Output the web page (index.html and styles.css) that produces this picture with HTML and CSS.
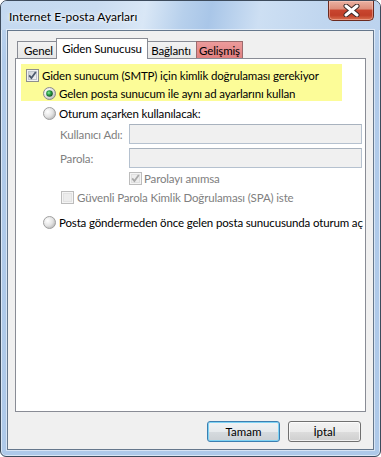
FILE: index.html
```html
<!DOCTYPE html>
<html lang="tr">
<head>
<meta charset="utf-8">
<title>Internet E-posta Ayarları</title>
<link rel="stylesheet" href="styles.css">
</head>
<body>
<svg class="defs" width="0" height="0" aria-hidden="true">
  <defs>
    <linearGradient id="cbfill" x1="0" y1="0" x2="1" y2="1">
      <stop offset="0" stop-color="#cbcfd5"/>
      <stop offset="1" stop-color="#f6f6f6"/>
    </linearGradient>
    <radialGradient id="rfill" cx="0.35" cy="0.35" r="0.7">
      <stop offset="0" stop-color="#ffffff"/>
      <stop offset="0.6" stop-color="#e3e3e3"/>
      <stop offset="1" stop-color="#b9b9b9"/>
    </radialGradient>
    <radialGradient id="rdot" cx="0.4" cy="0.4" r="0.65">
      <stop offset="0" stop-color="#8ff0a4"/>
      <stop offset="0.45" stop-color="#2aa043"/>
      <stop offset="1" stop-color="#0d4a1c"/>
    </radialGradient>
  </defs>
</svg>

<div class="window">
  <div class="titlebar">
    <span class="title">Internet E-posta Ayarları</span>
    <div class="close">
      <svg width="17" height="13" viewBox="0 0 17 13">
        <path d="M3 2 L14 11 M14 2 L3 11" stroke="#3b2a28" stroke-width="5" stroke-linecap="round"/>
        <path d="M3 2 L14 11 M14 2 L3 11" stroke="#ffffff" stroke-width="3" stroke-linecap="round"/>
      </svg>
    </div>
  </div>

  <div class="client">
    <div class="tabs">
      <div class="tab t-genel">Genel</div>
      <div class="tab sel t-giden">Giden Sunucusu</div>
      <div class="tab t-baglanti">Bağlantı</div>
      <div class="tab warn t-gelismis">Gelişmiş</div>
    </div>

    <div class="panel">
      <div class="hilite">
        <div class="row r-auth">
          <svg class="cb" width="13" height="13" viewBox="0 0 13 13">
            <rect x="0.5" y="0.5" width="12" height="12" fill="#f2f2f2" stroke="#8e8f8f"/>
            <rect x="2.5" y="2.5" width="8" height="8" fill="url(#cbfill)" stroke="#bfc4cb"/>
            <path d="M3.2 6.4 L5.4 9 L9.8 3" stroke="#4d5a6e" stroke-width="1.8" fill="none"/>
          </svg>
          <span>Giden sunucum (SMTP) için kimlik doğrulaması gerekiyor</span>
        </div>
        <div class="row r-same">
          <svg class="rb" width="13" height="13" viewBox="0 0 13 13">
            <circle cx="6.5" cy="6.5" r="6" fill="url(#rfill)" stroke="#8a8a8a"/>
            <circle cx="6.5" cy="6.5" r="3.3" fill="url(#rdot)"/>
          </svg>
          <span>Gelen posta sunucum ile aynı ad ayarlarını kullan</span>
        </div>
      </div>

      <div class="row r-login">
        <svg class="rb" width="13" height="13" viewBox="0 0 13 13">
          <circle cx="6.5" cy="6.5" r="6" fill="url(#rfill)" stroke="#a0a0a0"/>
        </svg>
        <span>Oturum açarken kullanılacak:</span>
      </div>

      <div class="field f-user">
        <span class="lbl">Kullanıcı Adı:</span>
        <div class="input"></div>
      </div>
      <div class="field f-pass">
        <span class="lbl">Parola:</span>
        <div class="input"></div>
      </div>

      <div class="row r-remember dis">
        <svg class="cb" width="13" height="13" viewBox="0 0 13 13">
          <rect x="0.5" y="0.5" width="12" height="12" fill="#f4f4f4" stroke="#bcbcbc"/>
          <rect x="2.5" y="2.5" width="8" height="8" fill="#ededed" stroke="#e0e0e0"/>
          <path d="M3.2 6.4 L5.4 9 L9.8 3" stroke="#a9a9a9" stroke-width="1.8" fill="none"/>
        </svg>
        <span>Parolayı anımsa</span>
      </div>

      <div class="row r-spa dis">
        <svg class="cb" width="13" height="13" viewBox="0 0 13 13">
          <rect x="0.5" y="0.5" width="12" height="12" fill="#f4f4f4" stroke="#bcbcbc"/>
          <rect x="2.5" y="2.5" width="8" height="8" fill="#ececec" stroke="#e2e2e2"/>
        </svg>
        <span>Güvenli Parola Kimlik Doğrulaması (SPA) iste</span>
      </div>

      <div class="row r-pop">
        <svg class="rb" width="13" height="13" viewBox="0 0 13 13">
          <circle cx="6.5" cy="6.5" r="6" fill="url(#rfill)" stroke="#a0a0a0"/>
        </svg>
        <span>Posta göndermeden önce gelen posta sunucusunda oturum aç</span>
      </div>
    </div>

    <div class="buttons">
      <button class="btn default">Tamam</button>
      <button class="btn">İptal</button>
    </div>
  </div>
</div>
</body>
</html>
```

FILE: styles.css
```css
* { box-sizing: border-box; }

html, body {
  margin: 0;
  padding: 0;
  background: #ffffff;
}

body {
  font-family: Lato, "Liberation Sans", sans-serif;
  font-size: 11.5px;
  letter-spacing: -0.15px;
  color: #000;
}

.defs {
  position: absolute;
  width: 0;
  height: 0;
}

.window {
  position: relative;
  width: 381px;
  height: 457px;
  border: 1px solid #3d4b5c;
  border-radius: 7px 7px 6px 6px;
  background: linear-gradient(to bottom, #c0d6ef 0px, #b1cbea 60px, #aec9e9 100%);
  box-shadow: inset 0 0 0 1px rgba(255, 255, 255, 0.55);
  display: flex;
  flex-direction: column;
  overflow: hidden;
}

.titlebar {
  height: 29px;
  display: flex;
  align-items: center;
  padding-left: 8px;
  background: linear-gradient(100deg,
    #c4d9f0 0%, #c9dcf1 25%, #d9e7f6 38%, #b7d0ec 48%,
    #a9c6e8 55%, #cddff3 68%, #c0d6ef 85%, #bcd3ee 100%);
}

.title {
  font-size: 12px;
  letter-spacing: 0;
  color: #000;
  white-space: nowrap;
  text-shadow: 0 0 6px #fff, 0 0 3px #fff;
  margin-top: 1px;
}

.close {
  position: absolute;
  top: 0;
  right: 6px;
  width: 46px;
  height: 20px;
  border: 1px solid #6b2a1f;
  border-top: none;
  border-radius: 0 0 5px 5px;
  background: linear-gradient(to bottom,
    #eab1a2 0%, #de8f7c 40%, #c8452e 50%, #c13f28 75%, #d8704f 100%);
  box-shadow: inset 0 0 0 1px rgba(255, 210, 200, 0.45);
  display: flex;
  align-items: center;
  justify-content: center;
}

.client {
  margin: 0 6px 6px 6px;
  flex: 1;
  background: #f0f0f0;
  border: 1px solid #65778c;
  box-shadow: 0 0 0 1px rgba(255, 255, 255, 0.5);
  padding: 7px 7px 0 7px;
  display: flex;
  flex-direction: column;
}

/* Tabs */
.tabs {
  display: flex;
  align-items: flex-end;
  height: 20px;
  padding-left: 2px;
}

.tab {
  height: 17px;
  border: 1px solid #898c95;
  border-bottom: none;
  background: linear-gradient(to bottom, #f3f3f3, #e6e6e6);
  display: flex;
  align-items: center;
  justify-content: center;
  font-size: 11.5px;
  white-space: nowrap;
  padding-top: 1px;
  margin-right: -1px;
}

.t-genel { width: 43px; }
.t-giden { width: 92px; }
.t-baglanti { width: 52px; }
.t-gelismis { width: 47px; }

.tab.sel {
  position: relative;
  z-index: 2;
  height: 21px;
  margin: 0 -3px -1px -3px;
  background: #ffffff;
  padding-top: 0;
  padding-bottom: 2px;
}

.tab.warn {
  background: linear-gradient(to bottom, #ec9b9b, #e07f80);
  border-color: #9b6b6e;
}

/* Panel */
.panel {
  height: 354px;
  background: #ffffff;
  border: 1px solid #898c95;
  padding: 0;
}

.row {
  display: flex;
  align-items: center;
  height: 18px;
  white-space: nowrap;
}

.row svg {
  flex: none;
  display: block;
}

.hilite {
  margin: 5px 0 0 5px;
  width: 321px;
  height: 37px;
  padding-top: 2px;
  background: #fcfc98;
}

.r-auth { padding-left: 5px; }
.r-auth .cb { margin-right: 3px; }

.r-same { padding-left: 22px; }
.rb { margin-right: 3px; }

.r-login { margin-top: 3px; padding-left: 27px; }

.field {
  display: flex;
  align-items: center;
  height: 20px;
  padding-left: 44px;
}

.f-user { margin-top: 2px; }
.f-pass { margin-top: 4px; }

.lbl {
  width: 69px;
  flex: none;
  white-space: nowrap;
  color: #808080;
}

.input {
  width: 233px;
  height: 20px;
  flex: none;
  background: #f0f0f0;
  border: 1px solid #b5c1cf;
  border-top-color: #a8b2be;
}

.dis { color: #808080; }

.r-remember { margin-top: 1px; padding-left: 113px; }
.r-remember .cb { margin-right: 2px; }

.r-spa { margin-top: 1px; padding-left: 45px; }
.r-spa .cb { margin-right: 3px; }

.r-pop { margin-top: 7px; padding-left: 27px; }

/* Buttons */
.buttons {
  display: flex;
  justify-content: flex-end;
  gap: 8px;
  padding-right: 5px;
  margin-top: 9px;
}

.btn {
  width: 73px;
  height: 21px;
  padding: 0;
  font-family: inherit;
  font-size: 11.5px;
  color: #000;
  border: 1px solid #707070;
  border-radius: 3px;
  background: linear-gradient(to bottom, #f2f2f2 0%, #ebebeb 50%, #dddddd 51%, #cfcfcf 100%);
  box-shadow: inset 0 0 0 1px rgba(255, 255, 255, 0.7);
}

.btn.default {
  border-color: #3c7fb1;
  box-shadow: inset 0 0 0 1px #7fd3f4;
  background: linear-gradient(to bottom, #f0f3f5 0%, #e6eaed 50%, #d6dbdf 51%, #cbd0d4 100%);
}
```
